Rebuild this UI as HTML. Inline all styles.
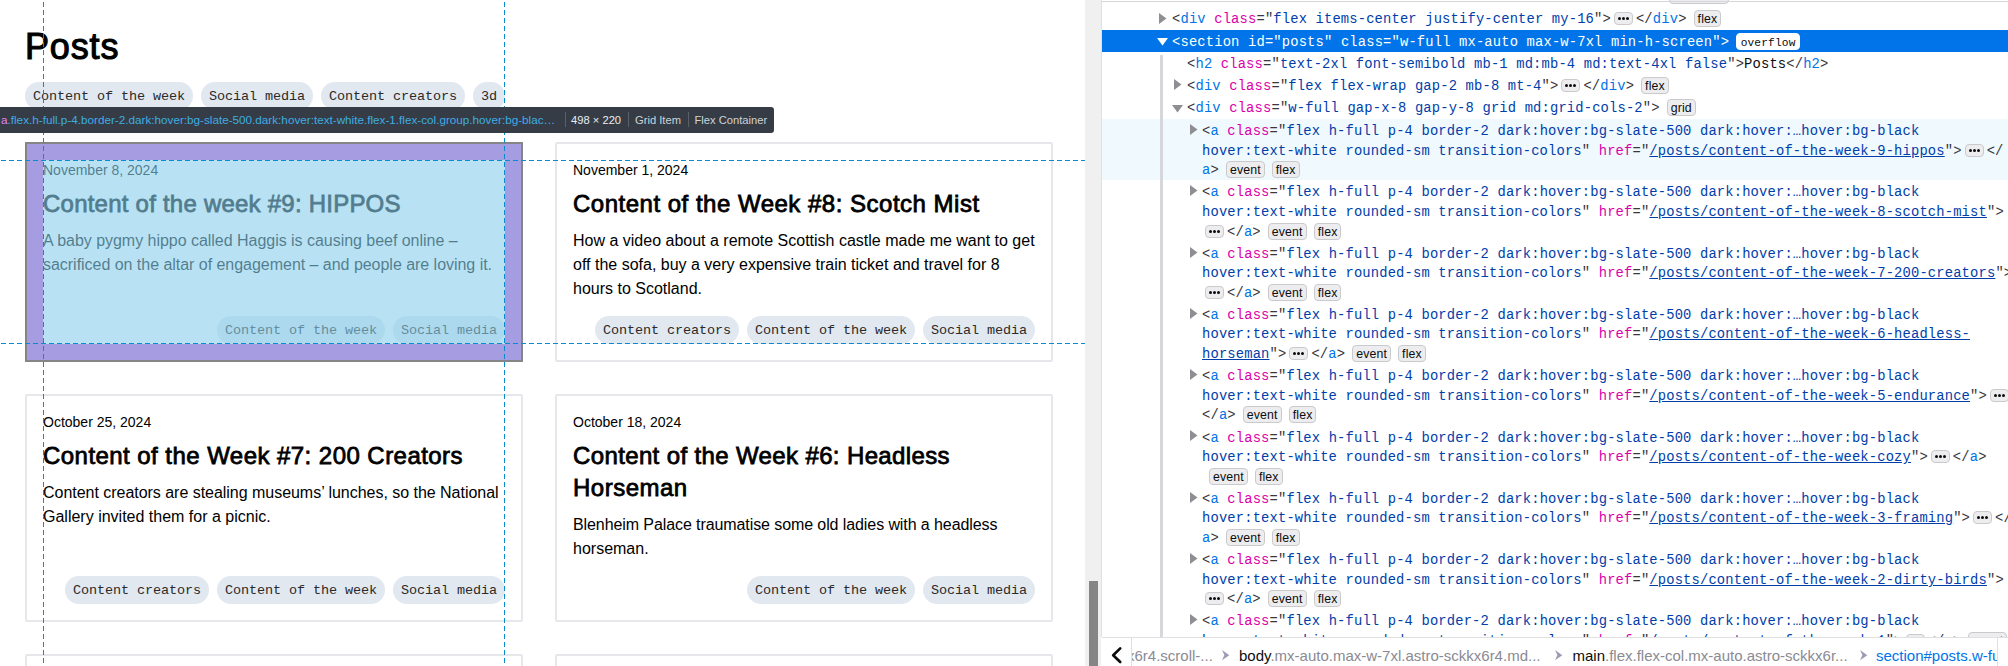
<!DOCTYPE html>
<html><head><meta charset="utf-8"><style>
*{box-sizing:border-box}
html,body{margin:0;padding:0}
body{width:2008px;height:666px;overflow:hidden;position:relative;background:#fff;font-family:"Liberation Sans",sans-serif}
#page{position:absolute;left:0;top:0;width:1085px;height:666px;overflow:hidden;background:#fff}
.h2{position:absolute;left:25px;top:27px;font-size:36px;line-height:40px;color:#000;letter-spacing:0.85px;-webkit-text-stroke:1.1px #000}
.pill{position:absolute;height:28px;border-radius:14px;background:#e2e8f0;font-family:"Liberation Mono",monospace;font-size:13.5px;letter-spacing:-0.1px;line-height:30px;padding-left:8px;color:#2a2a2a;white-space:pre}
.card{position:absolute;width:498px;border:2px solid #e5e7eb;border-radius:2px}
.date{position:absolute;font-size:14px;line-height:20px;color:#000;white-space:pre}
.title{position:absolute;font-size:24px;line-height:32px;color:#000;white-space:pre;letter-spacing:0.5px;-webkit-text-stroke:0.8px #000}
.desc{position:absolute;font-size:16px;line-height:24px;color:#000;white-space:pre}
#infobar{position:absolute;left:0;top:107px;width:774px;height:26px;background:#353c46;border-radius:0 3px 3px 0}
.ibt{position:absolute;top:107px;height:26px;line-height:26px;font-size:11.2px;white-space:pre}
.ib-tag{color:#e183fc}
.ib-cls{color:#40ace2}
.ib-sep{position:absolute;top:112px;width:1px;height:15px;background:#5a6169}
.ib-dim{color:#e9edf2}
.ib-type{color:#cfd3d8}
#sb{position:absolute;left:1085px;top:0;width:16px;height:666px;background:#f0f0f0}
#sbt{position:absolute;left:1089px;top:581px;width:9px;height:85px;background:#858585}
.ln{position:absolute;font-family:"Liberation Mono",monospace;font-size:13.8px;letter-spacing:0.16px;line-height:20px;white-space:pre;color:#38383d}
.ln .t{color:#0074e8}
.ln .an{color:#dd00a9}
.ln .av{color:#003eaa}
.ln .lk{text-decoration:underline}
.ln .tx{color:#0c0c0d}
.ln.sel, .ln.sel span.p, .ln.sel span.t, .ln.sel span.an, .ln.sel span.av{color:#fff}
.bd{display:inline-block;font-family:"Liberation Sans",sans-serif;font-size:12.3px;line-height:13px;height:17px;padding:2px 3px 0;border:1px solid #cacacc;border-radius:4px;background:#ededf0;color:#0c0c0d;margin-left:7px;vertical-align:0px}
.ln.sel .bd.ov{font-family:"Liberation Mono",monospace;font-size:11.2px;line-height:14px;padding:2px 3px 0 3.5px;background:#fff;color:#0c0c0d;border-color:#fff}
.dots{display:inline-block;width:19px;height:13px;border:1px solid #cacacc;border-radius:4px;background:#ededf0;margin:0 3px;vertical-align:-2px;position:relative}
.dots i{position:absolute;top:4px;width:3px;height:3px;border-radius:50%;background:#0c0c0d}
.dots i:nth-child(1){left:3px}.dots i:nth-child(2){left:7px}.dots i:nth-child(3){left:11px}
.tw{position:absolute}
.sel-tw{border-top-color:#fff}
#mk{position:absolute;left:0;top:0;width:2008px;height:637px;overflow:hidden}
#bc{position:absolute;left:1102px;top:637px;width:906px;height:29px;border-top:1px solid #e0e0e2;background:#fff}
.bc-back{position:absolute;left:8px;top:9px}
.bc-sep1{position:absolute;left:29px;top:0;width:1px;height:29px;background:#e0e0e2}
.bc-sep2{position:absolute;left:895px;top:0;width:1px;height:29px;background:#e0e0e2}
.bc-items{position:absolute;left:30px;top:0;width:865px;height:28px;overflow:hidden}
.bct{position:absolute;top:4px;white-space:pre;font-size:15px;line-height:28px}
.bc-g{color:#8a8a92}
.bc-n{color:#0c0c0d}
.bc-s{color:#0074e8}
.bc-arr{display:block}
</style></head><body>
<div id="page">
<div class="h2">Posts</div><div class="pill" style="left:25px;top:82px;width:168px">Content of the week</div><div class="pill" style="left:201px;top:82px;width:112px">Social media</div><div class="pill" style="left:321px;top:82px;width:144px">Content creators</div><div class="pill" style="left:473px;top:82px;width:32px">3d</div><div class="card" style="left:25px;top:142px;height:220px"></div><div class="date" style="left:43px;top:160px">November 8, 2024</div><div class="title" style="left:43px;top:188px;letter-spacing:0.23px">Content of the week #9: HIPPOS</div><div class="desc" style="left:43px;top:229px;letter-spacing:-0.03px">A baby pygmy hippo called Haggis is causing beef online –</div><div class="desc" style="left:43px;top:253px;letter-spacing:-0.03px">sacrificed on the altar of engagement – and people are loving it.</div><div class="pill" style="left:393px;top:316px;width:112px">Social media</div><div class="pill" style="left:217px;top:316px;width:168px">Content of the week</div><div class="card" style="left:555px;top:142px;height:220px"></div><div class="date" style="left:573px;top:160px">November 1, 2024</div><div class="title" style="left:573px;top:188px">Content of the Week #8: Scotch Mist</div><div class="desc" style="left:573px;top:229px">How a video about a remote Scottish castle made me want to get</div><div class="desc" style="left:573px;top:253px">off the sofa, buy a very expensive train ticket and travel for 8</div><div class="desc" style="left:573px;top:277px">hours to Scotland.</div><div class="pill" style="left:923px;top:316px;width:112px">Social media</div><div class="pill" style="left:747px;top:316px;width:168px">Content of the week</div><div class="pill" style="left:595px;top:316px;width:144px">Content creators</div><div class="card" style="left:25px;top:394px;height:228px"></div><div class="date" style="left:43px;top:412px">October 25, 2024</div><div class="title" style="left:43px;top:440px;letter-spacing:0.45px">Content of the Week #7: 200 Creators</div><div class="desc" style="left:43px;top:481px;letter-spacing:-0.03px">Content creators are stealing museums’ lunches, so the National</div><div class="desc" style="left:43px;top:505px">Gallery invited them for a picnic.</div><div class="pill" style="left:393px;top:576px;width:112px">Social media</div><div class="pill" style="left:217px;top:576px;width:168px">Content of the week</div><div class="pill" style="left:65px;top:576px;width:144px">Content creators</div><div class="card" style="left:555px;top:394px;height:228px"></div><div class="date" style="left:573px;top:412px">October 18, 2024</div><div class="title" style="left:573px;top:440px;letter-spacing:0.37px">Content of the Week #6: Headless</div><div class="title" style="left:573px;top:472px">Horseman</div><div class="desc" style="left:573px;top:513px;letter-spacing:-0.09px">Blenheim Palace traumatise some old ladies with a headless</div><div class="desc" style="left:573px;top:537px">horseman.</div><div class="pill" style="left:923px;top:576px;width:112px">Social media</div><div class="pill" style="left:747px;top:576px;width:168px">Content of the week</div><div class="card" style="left:25px;top:654px;height:200px"></div><div class="card" style="left:555px;top:654px;height:200px"></div>

<div style="position:absolute;left:25px;top:142px;width:498px;height:2px;background:rgba(68,68,68,.6)"></div>
<div style="position:absolute;left:25px;top:360px;width:498px;height:2px;background:rgba(68,68,68,.6)"></div>
<div style="position:absolute;left:25px;top:144px;width:2px;height:216px;background:rgba(68,68,68,.6)"></div>
<div style="position:absolute;left:521px;top:144px;width:2px;height:216px;background:rgba(68,68,68,.6)"></div>
<div style="position:absolute;left:27px;top:144px;width:494px;height:16px;background:rgba(106,90,205,.6)"></div>
<div style="position:absolute;left:27px;top:344px;width:494px;height:16px;background:rgba(106,90,205,.6)"></div>
<div style="position:absolute;left:27px;top:160px;width:16px;height:184px;background:rgba(106,90,205,.6)"></div>
<div style="position:absolute;left:505px;top:160px;width:16px;height:184px;background:rgba(106,90,205,.6)"></div>
<div style="position:absolute;left:43px;top:160px;width:462px;height:184px;background:rgba(137,207,235,.6)"></div>

<svg style="position:absolute;left:0;top:0" width="1085" height="666">
<g stroke="#0a8ccc" stroke-width="1" stroke-dasharray="5 3" fill="none" shape-rendering="crispEdges">
<line x1="43.5" y1="2" x2="43.5" y2="666"/>
<line x1="504.5" y1="2" x2="504.5" y2="666"/>
<line x1="1" y1="160.5" x2="1085" y2="160.5"/>
<line x1="1" y1="343.5" x2="1085" y2="343.5"/>
</g></svg>
<div id="infobar"></div>
<div class="ibt" style="left:1px;font-size:11.71px"><span class="ib-tag">a</span><span class="ib-cls">.flex.h-full.p-4.border-2.dark:hover:bg-slate-500.dark:hover:text-white.flex-1.flex-col.group.hover:bg-blac…</span></div>
<div class="ib-sep" style="left:565px"></div>
<div class="ibt ib-dim" style="left:571px">498 × 220</div>
<div class="ib-sep" style="left:628px"></div>
<div class="ibt ib-type" style="left:635px">Grid Item</div>
<div class="ib-sep" style="left:688px"></div>
<div class="ibt ib-type" style="left:694.5px">Flex Container</div>
</div>
<div id="sb"></div><div id="sbt"></div>
<div id="mk"><div style="position:absolute;left:1101px;top:0;width:1px;height:666px;background:#e0e0e2"></div><div style="position:absolute;left:1102px;top:30px;width:906px;height:22px;background:#0074e8"></div><div style="position:absolute;left:1102px;top:119px;width:906px;height:61px;background:#f0f9fe"></div><div style="position:absolute;left:1160px;top:55px;width:3px;height:582px;background:#d7d7db"></div><div class="bd" style="position:absolute;left:1669px;top:-12px;width:60px;height:16px;margin:0"></div><div style="position:absolute;left:1102px;top:1px;width:906px;height:1px;background:#d7d7db"></div><svg class="tw" style="left:1159px;top:13px" width="8" height="11"><path d="M0 0V11L7.5 5.5Z" fill="#8f8f93"/></svg><svg class="tw" style="left:1157px;top:38px" width="11" height="8"><path d="M0 0H11L5.5 7.5Z" fill="#fff"/></svg><svg class="tw" style="left:1174px;top:79px" width="8" height="11"><path d="M0 0V11L7.5 5.5Z" fill="#8f8f93"/></svg><svg class="tw" style="left:1172px;top:105px" width="11" height="8"><path d="M0 0H11L5.5 7.5Z" fill="#8f8f93"/></svg><svg class="tw" style="left:1190px;top:124px" width="8" height="11"><path d="M0 0V11L7.5 5.5Z" fill="#8f8f93"/></svg><svg class="tw" style="left:1190px;top:185px" width="8" height="11"><path d="M0 0V11L7.5 5.5Z" fill="#8f8f93"/></svg><svg class="tw" style="left:1190px;top:247px" width="8" height="11"><path d="M0 0V11L7.5 5.5Z" fill="#8f8f93"/></svg><svg class="tw" style="left:1190px;top:308px" width="8" height="11"><path d="M0 0V11L7.5 5.5Z" fill="#8f8f93"/></svg><svg class="tw" style="left:1190px;top:369px" width="8" height="11"><path d="M0 0V11L7.5 5.5Z" fill="#8f8f93"/></svg><svg class="tw" style="left:1190px;top:430px" width="8" height="11"><path d="M0 0V11L7.5 5.5Z" fill="#8f8f93"/></svg><svg class="tw" style="left:1190px;top:492px" width="8" height="11"><path d="M0 0V11L7.5 5.5Z" fill="#8f8f93"/></svg><svg class="tw" style="left:1190px;top:553px" width="8" height="11"><path d="M0 0V11L7.5 5.5Z" fill="#8f8f93"/></svg><svg class="tw" style="left:1190px;top:614px" width="8" height="11"><path d="M0 0V11L7.5 5.5Z" fill="#8f8f93"/></svg><div class="ln" style="left:1172px;top:10px"><span class="p">&lt;</span><span class="t">div</span> <span class="an">class</span><span class="p">="</span><span class="av">flex items-center justify-center my-16</span><span class="p">"&gt;</span><span class="dots"><i></i><i></i><i></i></span><span class="p">&lt;/</span><span class="t">div</span><span class="p">&gt;</span><span class="bd">flex</span></div><div class="ln sel" style="left:1172px;top:33px"><span class="p">&lt;</span><span class="t">section</span> <span class="an">id</span><span class="p">="</span><span class="av">posts</span><span class="p">"</span> <span class="an">class</span><span class="p">="</span><span class="av">w-full mx-auto max-w-7xl min-h-screen</span><span class="p">"&gt;</span><span class="bd ov">overflow</span></div><div class="ln" style="left:1187px;top:55px"><span class="p">&lt;</span><span class="t">h2</span> <span class="an">class</span><span class="p">="</span><span class="av">text-2xl font-semibold mb-1 md:mb-4 md:text-4xl false</span><span class="p">"&gt;</span><span class="tx">Posts</span><span class="p">&lt;/</span><span class="t">h2</span><span class="p">&gt;</span></div><div class="ln" style="left:1187px;top:77px"><span class="p">&lt;</span><span class="t">div</span> <span class="an">class</span><span class="p">="</span><span class="av">flex flex-wrap gap-2 mb-8 mt-4</span><span class="p">"&gt;</span><span class="dots"><i></i><i></i><i></i></span><span class="p">&lt;/</span><span class="t">div</span><span class="p">&gt;</span><span class="bd">flex</span></div><div class="ln" style="left:1187px;top:99px"><span class="p">&lt;</span><span class="t">div</span> <span class="an">class</span><span class="p">="</span><span class="av">w-full gap-x-8 gap-y-8 grid md:grid-cols-2</span><span class="p">"&gt;</span><span class="bd">grid</span></div><div class="ln" style="left:1202px;top:122px"><span class="p">&lt;</span><span class="t">a</span> <span class="an">class</span><span class="p">="</span><span class="av">flex h-full p-4 border-2 dark:hover:bg-slate-500 dark:hover:…hover:bg-black</span></div><div class="ln" style="left:1202px;top:142px"><span class="av">hover:text-white rounded-sm transition-colors</span><span class="p">"</span> <span class="an">href</span><span class="p">="</span><span class="av lk">/posts/content-of-the-week-9-hippos</span><span class="p">"&gt;</span><span class="dots"><i></i><i></i><i></i></span><span class="p">&lt;/</span></div><div class="ln" style="left:1202px;top:161px"><span class="p"></span><span class="t">a</span><span class="p">&gt;</span><span class="bd">event</span><span class="bd">flex</span></div><div class="ln" style="left:1202px;top:183px"><span class="p">&lt;</span><span class="t">a</span> <span class="an">class</span><span class="p">="</span><span class="av">flex h-full p-4 border-2 dark:hover:bg-slate-500 dark:hover:…hover:bg-black</span></div><div class="ln" style="left:1202px;top:203px"><span class="av">hover:text-white rounded-sm transition-colors</span><span class="p">"</span> <span class="an">href</span><span class="p">="</span><span class="av lk">/posts/content-of-the-week-8-scotch-mist</span><span class="p">"&gt;</span></div><div class="ln" style="left:1202px;top:223px"><span class="dots"><i></i><i></i><i></i></span><span class="p">&lt;/</span><span class="t">a</span><span class="p">&gt;</span><span class="bd">event</span><span class="bd">flex</span></div><div class="ln" style="left:1202px;top:245px"><span class="p">&lt;</span><span class="t">a</span> <span class="an">class</span><span class="p">="</span><span class="av">flex h-full p-4 border-2 dark:hover:bg-slate-500 dark:hover:…hover:bg-black</span></div><div class="ln" style="left:1202px;top:264px"><span class="av">hover:text-white rounded-sm transition-colors</span><span class="p">"</span> <span class="an">href</span><span class="p">="</span><span class="av lk">/posts/content-of-the-week-7-200-creators</span><span class="p">"&gt;</span></div><div class="ln" style="left:1202px;top:284px"><span class="dots"><i></i><i></i><i></i></span><span class="p">&lt;/</span><span class="t">a</span><span class="p">&gt;</span><span class="bd">event</span><span class="bd">flex</span></div><div class="ln" style="left:1202px;top:306px"><span class="p">&lt;</span><span class="t">a</span> <span class="an">class</span><span class="p">="</span><span class="av">flex h-full p-4 border-2 dark:hover:bg-slate-500 dark:hover:…hover:bg-black</span></div><div class="ln" style="left:1202px;top:325px"><span class="av">hover:text-white rounded-sm transition-colors</span><span class="p">"</span> <span class="an">href</span><span class="p">="</span><span class="av lk">/posts/content-of-the-week-6-headless-</span></div><div class="ln" style="left:1202px;top:345px"><span class="av lk">horseman</span><span class="p">"&gt;</span><span class="dots"><i></i><i></i><i></i></span><span class="p">&lt;/</span><span class="t">a</span><span class="p">&gt;</span><span class="bd">event</span><span class="bd">flex</span></div><div class="ln" style="left:1202px;top:367px"><span class="p">&lt;</span><span class="t">a</span> <span class="an">class</span><span class="p">="</span><span class="av">flex h-full p-4 border-2 dark:hover:bg-slate-500 dark:hover:…hover:bg-black</span></div><div class="ln" style="left:1202px;top:387px"><span class="av">hover:text-white rounded-sm transition-colors</span><span class="p">"</span> <span class="an">href</span><span class="p">="</span><span class="av lk">/posts/content-of-the-week-5-endurance</span><span class="p">"&gt;</span><span class="dots"><i></i><i></i><i></i></span></div><div class="ln" style="left:1202px;top:406px"><span class="p">&lt;/</span><span class="t">a</span><span class="p">&gt;</span><span class="bd">event</span><span class="bd">flex</span></div><div class="ln" style="left:1202px;top:429px"><span class="p">&lt;</span><span class="t">a</span> <span class="an">class</span><span class="p">="</span><span class="av">flex h-full p-4 border-2 dark:hover:bg-slate-500 dark:hover:…hover:bg-black</span></div><div class="ln" style="left:1202px;top:448px"><span class="av">hover:text-white rounded-sm transition-colors</span><span class="p">"</span> <span class="an">href</span><span class="p">="</span><span class="av lk">/posts/content-of-the-week-cozy</span><span class="p">"&gt;</span><span class="dots"><i></i><i></i><i></i></span><span class="p">&lt;/</span><span class="t">a</span><span class="p">&gt;</span></div><div class="ln" style="left:1202px;top:468px"><span class="bd">event</span><span class="bd">flex</span></div><div class="ln" style="left:1202px;top:490px"><span class="p">&lt;</span><span class="t">a</span> <span class="an">class</span><span class="p">="</span><span class="av">flex h-full p-4 border-2 dark:hover:bg-slate-500 dark:hover:…hover:bg-black</span></div><div class="ln" style="left:1202px;top:509px"><span class="av">hover:text-white rounded-sm transition-colors</span><span class="p">"</span> <span class="an">href</span><span class="p">="</span><span class="av lk">/posts/content-of-the-week-3-framing</span><span class="p">"&gt;</span><span class="dots"><i></i><i></i><i></i></span><span class="p">&lt;/</span></div><div class="ln" style="left:1202px;top:529px"><span class="t">a</span><span class="p">&gt;</span><span class="bd">event</span><span class="bd">flex</span></div><div class="ln" style="left:1202px;top:551px"><span class="p">&lt;</span><span class="t">a</span> <span class="an">class</span><span class="p">="</span><span class="av">flex h-full p-4 border-2 dark:hover:bg-slate-500 dark:hover:…hover:bg-black</span></div><div class="ln" style="left:1202px;top:571px"><span class="av">hover:text-white rounded-sm transition-colors</span><span class="p">"</span> <span class="an">href</span><span class="p">="</span><span class="av lk">/posts/content-of-the-week-2-dirty-birds</span><span class="p">"&gt;</span></div><div class="ln" style="left:1202px;top:590px"><span class="dots"><i></i><i></i><i></i></span><span class="p">&lt;/</span><span class="t">a</span><span class="p">&gt;</span><span class="bd">event</span><span class="bd">flex</span></div><div class="ln" style="left:1202px;top:612px"><span class="p">&lt;</span><span class="t">a</span> <span class="an">class</span><span class="p">="</span><span class="av">flex h-full p-4 border-2 dark:hover:bg-slate-500 dark:hover:…hover:bg-black</span></div><div class="ln" style="left:1202px;top:632px"><span class="av">hover:text-white rounded-sm transition-colors</span><span class="p">"</span> <span class="an">href</span><span class="p">="</span><span class="av lk">/posts/content-of-the-week-1</span><span class="p">"&gt;</span><span class="dots"><i></i><i></i><i></i></span><span class="p">&lt;/</span><span class="t">a</span><span class="p">&gt;</span><span class="bd">event</span><span class="bd">flex</span></div></div><div id="bc">
<svg style="position:absolute;left:8px;top:8px" width="14" height="18"><path d="M10.2 2.4L3.2 9.2L10.2 16" stroke="#0c0c0d" stroke-width="2.7" stroke-linecap="round" stroke-linejoin="round" fill="none"/></svg>
<div class="bc-sep1"></div>
<div class="bc-items">
<div class="bct" style="left:-5px"><span class="bc-g">x6r4.scroll-...</span></div>
<div style="position:absolute;left:89.5px;top:12px"><svg class="bc-arr" width="8" height="11" viewBox="0 0 8 11"><path d="M0 0L7.3 5.2L0 10.2L2.4 5.1Z" fill="#9b9bb5"/></svg></div>
<div class="bct" style="left:107px"><span class="bc-n">body</span><span class="bc-g">.mx-auto.max-w-7xl.astro-sckkx6r4.md...</span></div>
<div style="position:absolute;left:423px;top:12px"><svg class="bc-arr" width="8" height="11" viewBox="0 0 8 11"><path d="M0 0L7.3 5.2L0 10.2L2.4 5.1Z" fill="#9b9bb5"/></svg></div>
<div class="bct" style="left:440.5px"><span class="bc-n">main</span><span class="bc-g">.flex.flex-col.mx-auto.astro-sckkx6r...</span></div>
<div style="position:absolute;left:727.5px;top:12px"><svg class="bc-arr" width="8" height="11" viewBox="0 0 8 11"><path d="M0 0L7.3 5.2L0 10.2L2.4 5.1Z" fill="#9b9bb5"/></svg></div>
<div class="bct" style="left:744px"><span class="bc-s">section#posts.w-full</span></div>
</div>
<div class="bc-sep2"></div>
</div>
</body></html>
